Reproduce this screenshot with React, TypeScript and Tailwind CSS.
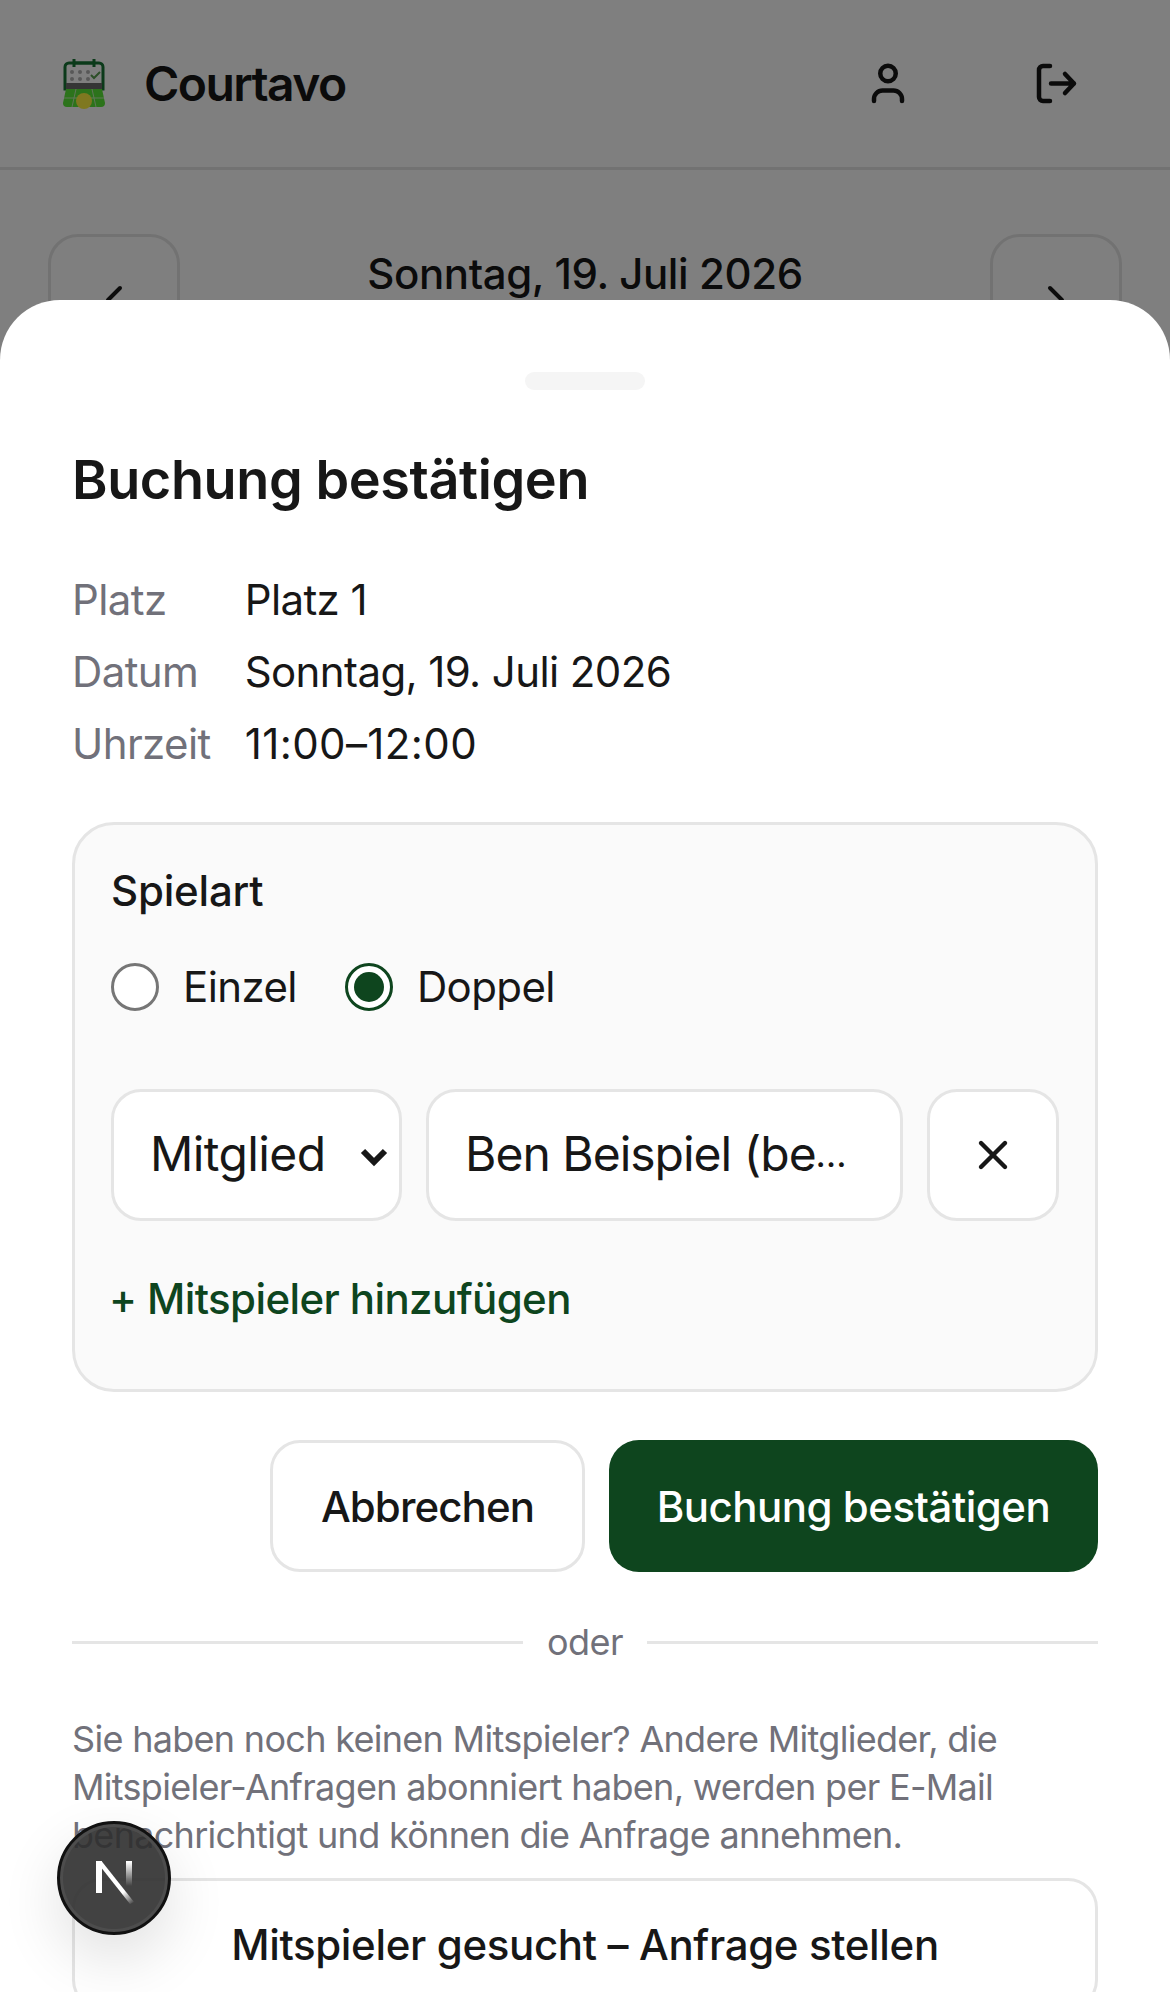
import React from "react";
import { ChevronLeft, ChevronRight, X } from "lucide-react";

function Logo() {
  return (
    <svg width="42" height="52" viewBox="0 0 42 52" fill="none" className="blur-[0.6px]">
      <path d="M2 31V9a4 4 0 0 1 4-4h30a4 4 0 0 1 4 4v22z" stroke="#167434" strokeWidth="3" fill="#ffffff" />
      <path d="M11 1v8M31 1v8M11 5h20" stroke="#167434" strokeWidth="3" />
      <g fill="#b0b0b0">
        <circle cx="9" cy="14" r="2" /><circle cx="17" cy="14" r="2" /><circle cx="25" cy="14" r="2" />
        <circle cx="9" cy="21" r="2" /><circle cx="17" cy="21" r="2" /><circle cx="25" cy="21" r="2" />
      </g>
      <path d="M28 17l3 3 6-6" stroke="#5a9e50" strokeWidth="2" />
      <rect x="3" y="25" width="36" height="6" fill="#6a6a6a" />
      <path d="M3 31h36l3 14a4 4 0 0 1-4 4H4a4 4 0 0 1-4-4z" fill="#58e636" />
      <path d="M13 31L9 49M29 31l4 18M1 40h40" stroke="#c0eeb0" strokeWidth="1" />
      <circle cx="21" cy="43" r="8" fill="#fff040" />
    </svg>
  );
}

function UserIcon() {
  return (
    <svg width="48" height="48" viewBox="0 0 48 48" fill="none" stroke="currentColor" strokeWidth="4.5" strokeLinecap="round" strokeLinejoin="round">
      <circle cx="24" cy="13.5" r="7.75" />
      <path d="M10 41v-2a8.5 8.5 0 0 1 8.5-8.5h11a8.5 8.5 0 0 1 8.5 8.5v2" />
    </svg>
  );
}

function ExitIcon() {
  return (
    <svg width="48" height="48" viewBox="0 0 48 48" fill="none" stroke="currentColor" strokeWidth="4.5" strokeLinecap="round" strokeLinejoin="round">
      <path d="M18 6h-7a4 4 0 0 0-4 4v27a4 4 0 0 0 4 4h7" />
      <path d="M19 23.5h23M33 14l9 9.5-9 9.5" />
    </svg>
  );
}

export default function App() {
  return (
    <div className="relative h-[1992px] w-[1170px] overflow-hidden bg-white font-['Inter',sans-serif] tracking-[-0.6px] text-[#171717]">
      <header className="flex h-[170px] items-center justify-between border-b-[3px] border-[#e5e5e5] px-[48px]">
        <div className="flex items-center gap-[39px] pl-[15px]">
          <Logo />
          <span className="text-[48px] font-semibold tracking-[-1.6px]">Courtavo</span>
        </div>
        <div className="flex items-center gap-[36px]">
          <button className="flex h-[132px] w-[132px] items-center justify-center"><UserIcon /></button>
          <button className="flex h-[132px] w-[132px] items-center justify-center"><ExitIcon /></button>
        </div>
      </header>
      <div className="flex items-start justify-between px-[48px] pt-[64px]">
        <button className="flex h-[132px] w-[132px] items-center justify-center rounded-[30px] border-[3px] border-[#e5e5e5]">
          <ChevronLeft size={48} />
        </button>
        <div className="pt-[8px] text-[42px] font-medium tracking-[-0.4px]">Sonntag, 19. Juli 2026</div>
        <button className="flex h-[132px] w-[132px] items-center justify-center rounded-[30px] border-[3px] border-[#e5e5e5]">
          <ChevronRight size={48} />
        </button>
      </div>

      <div className="absolute inset-0 bg-black/50" />

      <div className="absolute inset-x-0 top-[300px] bottom-0 rounded-t-[60px] bg-white px-[72px] pt-[72px]">
        <div className="mx-auto h-[18px] w-[120px] rounded-full bg-[#f5f5f5]" />
        <h2 className="mt-[54px] text-[54px] leading-[72px] font-semibold tracking-[-0.4px]">Buchung bestätigen</h2>
        <div className="mt-[54px] grid grid-cols-[max-content_1fr] gap-x-[34px] gap-y-[12px] text-[42px] leading-[60px]">
          <span className="text-[#71717a]">Platz</span>
          <span>Platz 1</span>
          <span className="text-[#71717a]">Datum</span>
          <span>Sonntag, 19. Juli 2026</span>
          <span className="text-[#71717a]">Uhrzeit</span>
          <span className="tracking-[0.4px]">11:00–12:00</span>
        </div>

        <section className="mt-[48px] rounded-[42px] border-[3px] border-[#e5e5e5] bg-[#fafafa] px-[36px] pt-[36px] pb-[60px]">
          <div className="text-[42px] leading-[60px] font-medium tracking-[-0.2px]">Spielart</div>
          <div className="mt-[36px] flex items-center gap-[48px] text-[42px] leading-[60px]">
            <label className="flex items-center gap-[24px]">
              <span className="h-[48px] w-[48px] rounded-full border-[3px] border-[#767676] bg-white" />
              Einzel
            </label>
            <label className="flex items-center gap-[24px]">
              <span className="flex h-[48px] w-[48px] items-center justify-center rounded-full border-[3px] border-[#0e451e] bg-white">
                <span className="h-[30px] w-[30px] rounded-full bg-[#0e451e]" />
              </span>
              Doppel
            </label>
          </div>
          <div className="mt-[72px] flex gap-[24px]">
            <div className="relative flex h-[132px] w-[291px] items-center rounded-[30px] border-[3px] border-[#e5e5e5] bg-white pb-[2px] pl-[36px] text-[48px]">
              Mitglied
              <svg className="absolute top-[55px] right-[10px]" width="30" height="20" viewBox="0 0 30 20" fill="none"><path d="M4 4l11 11L26 4" stroke="#171717" strokeWidth="6" /></svg>
            </div>
            <div className="flex h-[132px] w-[477px] items-center rounded-[30px] border-[3px] border-[#e5e5e5] bg-white pb-[2px] pl-[36px] text-[48px] tracking-[-1px] whitespace-nowrap">
              Ben Beispiel (be<span className="text-[36px]">…</span>
            </div>
            <button className="flex h-[132px] w-[132px] items-center justify-center rounded-[30px] border-[3px] border-[#e5e5e5] bg-white">
              <X size={48} strokeWidth={2.2} />
            </button>
          </div>
          <div className="mt-[48px] -ml-[2px] text-[42px] leading-[60px] font-medium text-[#0e451e]">+ Mitspieler hinzufügen</div>
        </section>

        <div className="mt-[48px] flex justify-end gap-[24px]">
          <button className="h-[132px] w-[315px] rounded-[30px] border-[3px] border-[#e5e5e5] bg-white text-[42px] font-medium tracking-[-0.9px]">Abbrechen</button>
          <button className="h-[132px] w-[489px] rounded-[30px] bg-[#0e451e] text-[42px] font-medium tracking-[-0.5px] text-white">Buchung bestätigen</button>
        </div>

        <div className="mt-[46px] flex items-center gap-[24px]">
          <div className="h-[3px] flex-1 bg-[#e5e5e5]" />
          <span className="text-[36px] leading-[48px] tracking-[-0.5px] text-[#71717a]">oder</span>
          <div className="h-[3px] flex-1 bg-[#e5e5e5]" />
        </div>

        <p className="mt-[49px] text-[36px] leading-[48px] tracking-[-0.7px] text-[#71717a]">
          Sie haben noch keinen Mitspieler? Andere Mitglieder, die Mitspieler-Anfragen abonniert haben, werden per E-Mail benachrichtigt und können die Anfrage annehmen.
        </p>
        <button className="mt-[19px] h-[132px] w-full rounded-[30px] border-[3px] border-[#e5e5e5] bg-white text-[42px] font-medium tracking-[-0.35px]">
          Mitspieler gesucht – Anfrage stellen
        </button>
      </div>

      <div className="absolute top-[1821px] left-[57px] flex h-[114px] w-[114px] items-center justify-center rounded-full border-[3px] border-[#111] bg-[#2e2e2e]/90 pt-[8px] shadow-[0_24px_60px_rgba(0,0,0,0.12),inset_0_0_0_3px_#4d4d4d]">
        <svg width="42" height="48" viewBox="0 0 42 48" fill="none">
          <defs>
            <linearGradient id="nd" x1="6" y1="4" x2="41" y2="45" gradientUnits="userSpaceOnUse"><stop stopColor="#fff" /><stop offset="0.72" stopColor="#fff" /><stop offset="1" stopColor="#fff" stopOpacity="0" /></linearGradient>
            <linearGradient id="nv" x1="36" y1="4" x2="36" y2="28" gradientUnits="userSpaceOnUse"><stop stopColor="#fff" /><stop offset="1" stopColor="#fff" stopOpacity="0" /></linearGradient>
          </defs>
          <path d="M3 3h6v32H3z" fill="#fff" />
          <path d="M3 3h5.5L41 44l-4 2z" fill="url(#nd)" />
          <path d="M33 3h6v25h-6z" fill="url(#nv)" />
        </svg>
      </div>
    </div>
  );
}
